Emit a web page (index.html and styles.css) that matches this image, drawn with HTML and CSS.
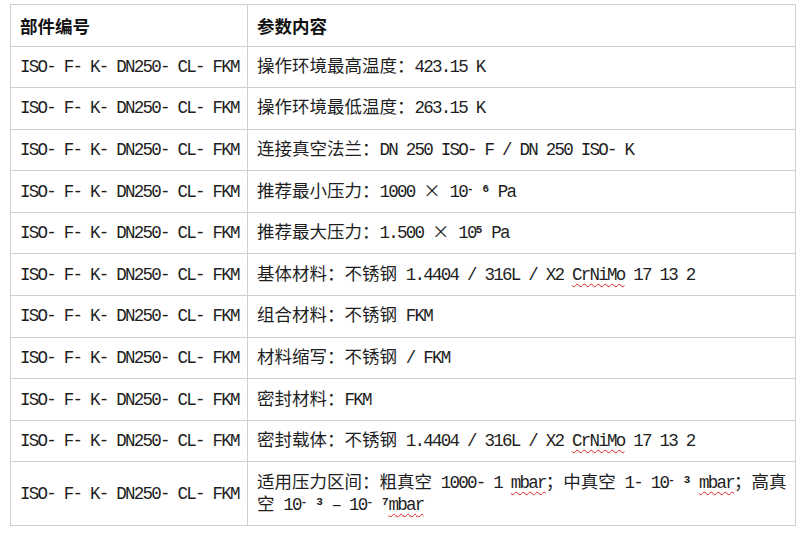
FILE: index.html
```html
<!DOCTYPE html>
<html lang="zh">
<head>
<meta charset="utf-8">
<title>参数表</title>
<link rel="stylesheet" href="styles.css">
</head>
<body>
<div class="page">
<table class="spec">
<colgroup><col class="col-code"><col class="col-param"></colgroup>
<thead>
<tr><th>部件编号</th><th>参数内容</th></tr>
</thead>
<tbody>
<tr><td class="code">ISO- F- K- DN250- CL- FKM</td><td><span class="c">操作环境最高温度：</span>423.15 K</td></tr>
<tr><td class="code">ISO- F- K- DN250- CL- FKM</td><td><span class="c">操作环境最低温度：</span>263.15 K</td></tr>
<tr><td class="code">ISO- F- K- DN250- CL- FKM</td><td><span class="c">连接真空法兰：</span>DN 250 ISO- F / DN 250 ISO- K</td></tr>
<tr><td class="code">ISO- F- K- DN250- CL- FKM</td><td><span class="c">推荐最小压力：</span>1000 <span class="c">×</span> 10<sup>-</sup> <sup>6</sup> Pa</td></tr>
<tr><td class="code">ISO- F- K- DN250- CL- FKM</td><td><span class="c">推荐最大压力：</span>1.500 <span class="c">×</span> 10<sup>5</sup> Pa</td></tr>
<tr><td class="code">ISO- F- K- DN250- CL- FKM</td><td><span class="c">基体材料：不锈钢</span> 1.4404 / 316L / X2 <span class="sp">CrNiMo</span> 17 13 2</td></tr>
<tr><td class="code">ISO- F- K- DN250- CL- FKM</td><td><span class="c">组合材料：不锈钢</span> FKM</td></tr>
<tr><td class="code">ISO- F- K- DN250- CL- FKM</td><td><span class="c">材料缩写：不锈钢</span> / FKM</td></tr>
<tr><td class="code">ISO- F- K- DN250- CL- FKM</td><td><span class="c">密封材料：</span>FKM</td></tr>
<tr><td class="code">ISO- F- K- DN250- CL- FKM</td><td><span class="c">密封载体：不锈钢</span> 1.4404 / 316L / X2 <span class="sp">CrNiMo</span> 17 13 2</td></tr>
<tr><td class="code">ISO- F- K- DN250- CL- FKM</td><td><span class="line"><span class="c">适用压力区间：粗真空</span> 1000- 1 <span class="sp">mbar</span><span class="c">；中真空</span> 1- 10<sup>-</sup> <sup>3</sup> <span class="sp">mbar</span><span class="c">；高真</span></span><br><span class="line"><span class="c">空</span> 10<sup>-</sup> <sup>3</sup> – 10<sup>-</sup> <sup>7</sup><span class="sp">mbar</span></span></td></tr>
</tbody>
</table>
</div>
</body>
</html>
```
FILE: styles.css
```css
html, body {
  margin: 0;
  padding: 0;
  background: #ffffff;
}

.page {
  padding: 4px 0 0 10px;
}

.spec {
  width: 786px;
  border-collapse: collapse;
  table-layout: fixed;
  color: #1e1e1e;
  font-family: "Liberation Mono", "Noto Sans CJK SC", monospace;
  font-size: 17.5px;
  letter-spacing: -1.75px;
}

.col-code {
  width: 237px;
}

.spec th,
.spec td {
  border: 1px solid #cfcfcf;
  padding: 9.3px 9px;
  line-height: 22px;
  text-align: left;
  vertical-align: middle;
  white-space: nowrap;
}

.spec th {
  font-family: "Noto Sans CJK SC", sans-serif;
  font-weight: 700;
  letter-spacing: 0;
  color: #111111;
  line-height: 16px;
  height: 22px;
  padding-top: 9.5px;
  padding-bottom: 9px;
}

.c {
  font-family: "Noto Sans CJK SC", sans-serif;
  letter-spacing: 0;
  line-height: 14px;
}

.spec sup {
  font-size: 11px;
  letter-spacing: 0;
  line-height: 0;
  vertical-align: 0.5em;
  font-weight: 700;
}

.sp {
  text-decoration-line: underline;
  text-decoration-style: wavy;
  text-decoration-color: #e02020;
  text-decoration-thickness: 1px;
  text-underline-offset: 3px;
}

.line {
  white-space: nowrap;
}
```
